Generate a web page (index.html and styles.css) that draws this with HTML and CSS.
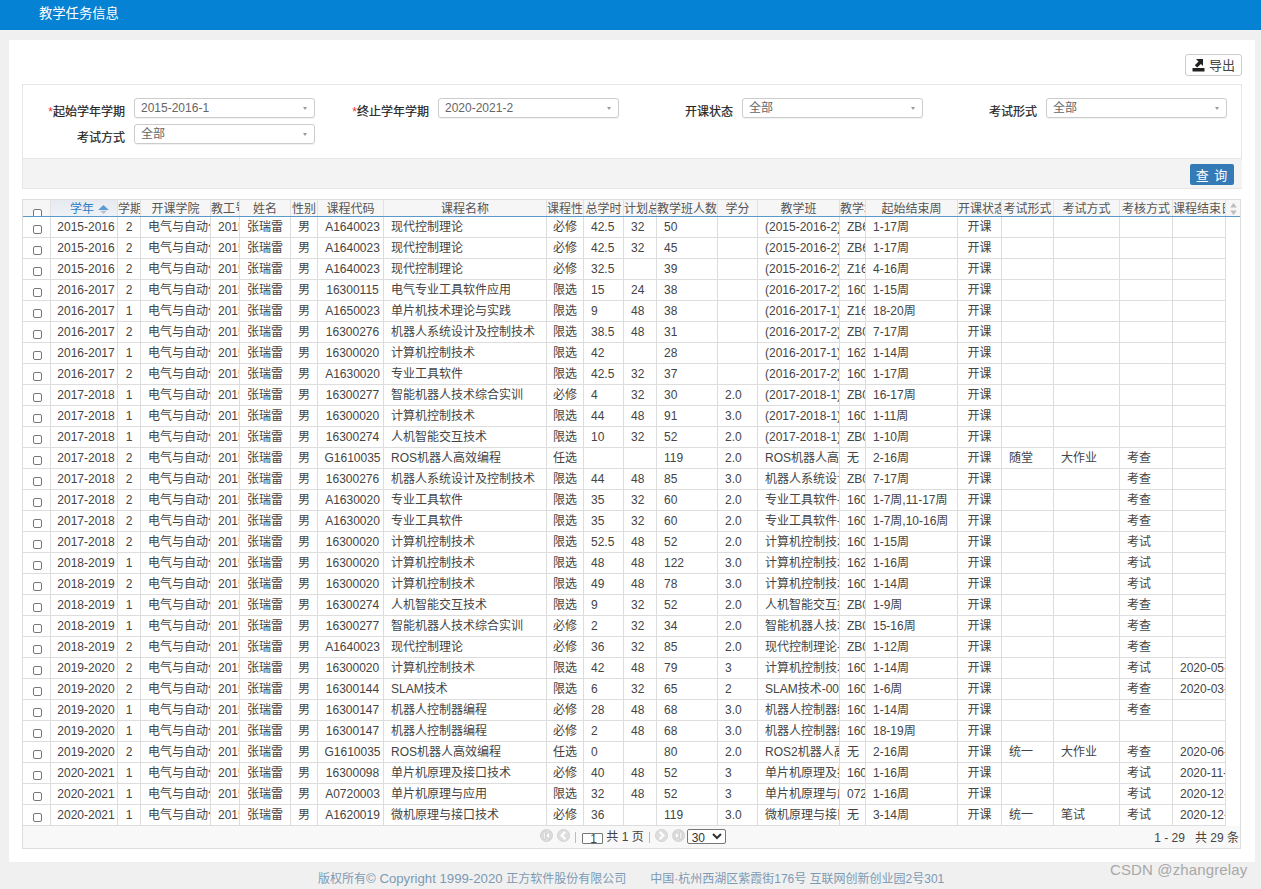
FILE: index.html
```html
<!DOCTYPE html>
<html lang="zh-CN">
<head>
<meta charset="utf-8">
<title>教学任务信息</title>
<link rel="stylesheet" href="styles.css">
</head>
<body>
<header class="topbar"><span class="topbar-title">教学任务信息</span></header>
<main class="panel">
  <div class="toolbar">
    <button class="export-btn" type="button">
      <svg class="export-icon" width="13" height="14" viewBox="0 0 13 14"><path d="M.5 10H12.500V13.500H.5Z" fill="#222"/><path d="M4 1H11V8L8.900 5.900 5.200 9.500 2.800 7.200 6.500 3.500Z" fill="#222"/></svg>
      <span>导出</span>
    </button>
  </div>
  <section class="filter">
    <div class="field"><label class="field-label"><i class="req">*</i>起始学年学期</label><div class="combo"><span>2015-2016-1</span><b class="combo-arrow"></b></div></div>
    <div class="field"><label class="field-label"><i class="req">*</i>终止学年学期</label><div class="combo"><span>2020-2021-2</span><b class="combo-arrow"></b></div></div>
    <div class="field"><label class="field-label">开课状态</label><div class="combo"><span>全部</span><b class="combo-arrow"></b></div></div>
    <div class="field"><label class="field-label">考试形式</label><div class="combo"><span>全部</span><b class="combo-arrow"></b></div></div>
    <div class="field"><label class="field-label">考试方式</label><div class="combo"><span>全部</span><b class="combo-arrow"></b></div></div>
  </section>
  <div class="actions"><button class="query-btn" type="button">查 询</button></div>
  <section class="grid">
    <table class="head-table">
      <colgroup><col class="c1"><col class="c2"><col class="c3"><col class="c4"><col class="c5"><col class="c6"><col class="c7"><col class="c8"><col class="c9"><col class="c10"><col class="c11"><col class="c12"><col class="c13"><col class="c14"><col class="c15"><col class="c16"><col class="c17"><col class="c18"><col class="c19"><col class="c20"><col class="c21"><col class="c22"><col class="c23"></colgroup>
      <thead><tr>
        <th><div class="head-clip"><input class="cb cb-head" type="checkbox"></div></th>
        <th class="sorted">学年 <svg class="sort-icon" width="13" height="9" viewBox="0 0 13 10"><path d="M6.500 0 12.500 5.500H.5Z" fill="#5b9bd5"/><path d="M2.500 6.500H10.500L6.500 10Z" fill="#b9c2cc"/></svg></th>
        <th>学期</th><th>开课学院</th><th>教工号</th><th>姓名</th><th>性别</th><th>课程代码</th><th>课程名称</th><th>课程性质</th><th>总学时</th><th>计划总学时</th><th class="wide">教学班人数</th><th>学分</th><th>教学班</th><th>教学地点</th><th>起始结束周</th><th>开课状态</th><th>考试形式</th><th>考试方式</th><th>考核方式</th><th>课程结束日期</th>
        <th class="filler"><svg class="scroll-icon" width="9" height="15" viewBox="0 0 9 15"><path d="M4.500 1 8 6H1Z" fill="#bbb"/><path d="M1 9H8L4.500 14Z" fill="#bbb"/></svg></th>
      </tr></thead>
    </table>
    <table class="body-table">
      <colgroup><col class="c1"><col class="c2"><col class="c3"><col class="c4"><col class="c5"><col class="c6"><col class="c7"><col class="c8"><col class="c9"><col class="c10"><col class="c11"><col class="c12"><col class="c13"><col class="c14"><col class="c15"><col class="c16"><col class="c17"><col class="c18"><col class="c19"><col class="c20"><col class="c21"><col class="c22"></colgroup>
      <tbody>
        <tr><td class="ck"><input class="cb" type="checkbox"></td><td class="yr">2015-2016</td><td class="ctr">2</td><td>电气与自动化工程学院</td><td>20150</td><td class="ctr">张瑞雷</td><td class="ctr">男</td><td class="yr">A1640023</td><td>现代控制理论</td><td class="ctr">必修</td><td>42.5</td><td>32</td><td>50</td><td></td><td>(2015-2016-2)-A1640023</td><td>ZB601</td><td>1-17周</td><td class="ctr">开课</td><td></td><td></td><td></td><td></td></tr>
        <tr><td class="ck"><input class="cb" type="checkbox"></td><td class="yr">2015-2016</td><td class="ctr">2</td><td>电气与自动化工程学院</td><td>20150</td><td class="ctr">张瑞雷</td><td class="ctr">男</td><td class="yr">A1640023</td><td>现代控制理论</td><td class="ctr">必修</td><td>42.5</td><td>32</td><td>45</td><td></td><td>(2015-2016-2)-A1640023</td><td>ZB601</td><td>1-17周</td><td class="ctr">开课</td><td></td><td></td><td></td><td></td></tr>
        <tr><td class="ck"><input class="cb" type="checkbox"></td><td class="yr">2015-2016</td><td class="ctr">2</td><td>电气与自动化工程学院</td><td>20150</td><td class="ctr">张瑞雷</td><td class="ctr">男</td><td class="yr">A1640023</td><td>现代控制理论</td><td class="ctr">必修</td><td>32.5</td><td></td><td>39</td><td></td><td>(2015-2016-2)-A1640023</td><td>Z1601</td><td>4-16周</td><td class="ctr">开课</td><td></td><td></td><td></td><td></td></tr>
        <tr><td class="ck"><input class="cb" type="checkbox"></td><td class="yr">2016-2017</td><td class="ctr">2</td><td>电气与自动化工程学院</td><td>20150</td><td class="ctr">张瑞雷</td><td class="ctr">男</td><td class="yr">16300115</td><td>电气专业工具软件应用</td><td class="ctr">限选</td><td>15</td><td>24</td><td>38</td><td></td><td>(2016-2017-2)-16300115</td><td>16001</td><td>1-15周</td><td class="ctr">开课</td><td></td><td></td><td></td><td></td></tr>
        <tr><td class="ck"><input class="cb" type="checkbox"></td><td class="yr">2016-2017</td><td class="ctr">1</td><td>电气与自动化工程学院</td><td>20150</td><td class="ctr">张瑞雷</td><td class="ctr">男</td><td class="yr">A1650023</td><td>单片机技术理论与实践</td><td class="ctr">限选</td><td>9</td><td>48</td><td>38</td><td></td><td>(2016-2017-1)-A1650023</td><td>Z1601</td><td>18-20周</td><td class="ctr">开课</td><td></td><td></td><td></td><td></td></tr>
        <tr><td class="ck"><input class="cb" type="checkbox"></td><td class="yr">2016-2017</td><td class="ctr">2</td><td>电气与自动化工程学院</td><td>20150</td><td class="ctr">张瑞雷</td><td class="ctr">男</td><td class="yr">16300276</td><td>机器人系统设计及控制技术</td><td class="ctr">限选</td><td>38.5</td><td>48</td><td>31</td><td></td><td>(2016-2017-2)-16300276</td><td>ZB001</td><td>7-17周</td><td class="ctr">开课</td><td></td><td></td><td></td><td></td></tr>
        <tr><td class="ck"><input class="cb" type="checkbox"></td><td class="yr">2016-2017</td><td class="ctr">1</td><td>电气与自动化工程学院</td><td>20150</td><td class="ctr">张瑞雷</td><td class="ctr">男</td><td class="yr">16300020</td><td>计算机控制技术</td><td class="ctr">限选</td><td>42</td><td></td><td>28</td><td></td><td>(2016-2017-1)-16300020</td><td>16201</td><td>1-14周</td><td class="ctr">开课</td><td></td><td></td><td></td><td></td></tr>
        <tr><td class="ck"><input class="cb" type="checkbox"></td><td class="yr">2016-2017</td><td class="ctr">2</td><td>电气与自动化工程学院</td><td>20150</td><td class="ctr">张瑞雷</td><td class="ctr">男</td><td class="yr">A1630020</td><td>专业工具软件</td><td class="ctr">限选</td><td>42.5</td><td>32</td><td>37</td><td></td><td>(2016-2017-2)-A1630020</td><td>16001</td><td>1-17周</td><td class="ctr">开课</td><td></td><td></td><td></td><td></td></tr>
        <tr><td class="ck"><input class="cb" type="checkbox"></td><td class="yr">2017-2018</td><td class="ctr">1</td><td>电气与自动化工程学院</td><td>20150</td><td class="ctr">张瑞雷</td><td class="ctr">男</td><td class="yr">16300277</td><td>智能机器人技术综合实训</td><td class="ctr">必修</td><td>4</td><td>32</td><td>30</td><td>2.0</td><td>(2017-2018-1)-16300277</td><td>ZB001</td><td>16-17周</td><td class="ctr">开课</td><td></td><td></td><td></td><td></td></tr>
        <tr><td class="ck"><input class="cb" type="checkbox"></td><td class="yr">2017-2018</td><td class="ctr">1</td><td>电气与自动化工程学院</td><td>20150</td><td class="ctr">张瑞雷</td><td class="ctr">男</td><td class="yr">16300020</td><td>计算机控制技术</td><td class="ctr">限选</td><td>44</td><td>48</td><td>91</td><td>3.0</td><td>(2017-2018-1)-16300020</td><td>16001</td><td>1-11周</td><td class="ctr">开课</td><td></td><td></td><td></td><td></td></tr>
        <tr><td class="ck"><input class="cb" type="checkbox"></td><td class="yr">2017-2018</td><td class="ctr">1</td><td>电气与自动化工程学院</td><td>20150</td><td class="ctr">张瑞雷</td><td class="ctr">男</td><td class="yr">16300274</td><td>人机智能交互技术</td><td class="ctr">限选</td><td>10</td><td>32</td><td>52</td><td>2.0</td><td>(2017-2018-1)-16300274</td><td>ZB001</td><td>1-10周</td><td class="ctr">开课</td><td></td><td></td><td></td><td></td></tr>
        <tr><td class="ck"><input class="cb" type="checkbox"></td><td class="yr">2017-2018</td><td class="ctr">2</td><td>电气与自动化工程学院</td><td>20150</td><td class="ctr">张瑞雷</td><td class="ctr">男</td><td class="yr">G1610035</td><td>ROS机器人高效编程</td><td class="ctr">任选</td><td></td><td></td><td>119</td><td>2.0</td><td>ROS机器人高效编程</td><td>无</td><td>2-16周</td><td class="ctr">开课</td><td>随堂</td><td>大作业</td><td>考查</td><td></td></tr>
        <tr><td class="ck"><input class="cb" type="checkbox"></td><td class="yr">2017-2018</td><td class="ctr">2</td><td>电气与自动化工程学院</td><td>20150</td><td class="ctr">张瑞雷</td><td class="ctr">男</td><td class="yr">16300276</td><td>机器人系统设计及控制技术</td><td class="ctr">限选</td><td>44</td><td>48</td><td>85</td><td>3.0</td><td>机器人系统设计及控制技术</td><td>ZB001</td><td>7-17周</td><td class="ctr">开课</td><td></td><td></td><td>考查</td><td></td></tr>
        <tr><td class="ck"><input class="cb" type="checkbox"></td><td class="yr">2017-2018</td><td class="ctr">2</td><td>电气与自动化工程学院</td><td>20150</td><td class="ctr">张瑞雷</td><td class="ctr">男</td><td class="yr">A1630020</td><td>专业工具软件</td><td class="ctr">限选</td><td>35</td><td>32</td><td>60</td><td>2.0</td><td>专业工具软件-0001</td><td>16001</td><td>1-7周,11-17周</td><td class="ctr">开课</td><td></td><td></td><td>考查</td><td></td></tr>
        <tr><td class="ck"><input class="cb" type="checkbox"></td><td class="yr">2017-2018</td><td class="ctr">2</td><td>电气与自动化工程学院</td><td>20150</td><td class="ctr">张瑞雷</td><td class="ctr">男</td><td class="yr">A1630020</td><td>专业工具软件</td><td class="ctr">限选</td><td>35</td><td>32</td><td>60</td><td>2.0</td><td>专业工具软件-0002</td><td>16001</td><td>1-7周,10-16周</td><td class="ctr">开课</td><td></td><td></td><td>考查</td><td></td></tr>
        <tr><td class="ck"><input class="cb" type="checkbox"></td><td class="yr">2017-2018</td><td class="ctr">2</td><td>电气与自动化工程学院</td><td>20150</td><td class="ctr">张瑞雷</td><td class="ctr">男</td><td class="yr">16300020</td><td>计算机控制技术</td><td class="ctr">限选</td><td>52.5</td><td>48</td><td>52</td><td>2.0</td><td>计算机控制技术-0001</td><td>16001</td><td>1-15周</td><td class="ctr">开课</td><td></td><td></td><td>考试</td><td></td></tr>
        <tr><td class="ck"><input class="cb" type="checkbox"></td><td class="yr">2018-2019</td><td class="ctr">1</td><td>电气与自动化工程学院</td><td>20150</td><td class="ctr">张瑞雷</td><td class="ctr">男</td><td class="yr">16300020</td><td>计算机控制技术</td><td class="ctr">限选</td><td>48</td><td>48</td><td>122</td><td>3.0</td><td>计算机控制技术-0002</td><td>16201</td><td>1-16周</td><td class="ctr">开课</td><td></td><td></td><td>考试</td><td></td></tr>
        <tr><td class="ck"><input class="cb" type="checkbox"></td><td class="yr">2018-2019</td><td class="ctr">2</td><td>电气与自动化工程学院</td><td>20150</td><td class="ctr">张瑞雷</td><td class="ctr">男</td><td class="yr">16300020</td><td>计算机控制技术</td><td class="ctr">限选</td><td>49</td><td>48</td><td>78</td><td>3.0</td><td>计算机控制技术-0003</td><td>16001</td><td>1-14周</td><td class="ctr">开课</td><td></td><td></td><td>考试</td><td></td></tr>
        <tr><td class="ck"><input class="cb" type="checkbox"></td><td class="yr">2018-2019</td><td class="ctr">1</td><td>电气与自动化工程学院</td><td>20150</td><td class="ctr">张瑞雷</td><td class="ctr">男</td><td class="yr">16300274</td><td>人机智能交互技术</td><td class="ctr">限选</td><td>9</td><td>32</td><td>52</td><td>2.0</td><td>人机智能交互技术-01</td><td>ZB001</td><td>1-9周</td><td class="ctr">开课</td><td></td><td></td><td>考查</td><td></td></tr>
        <tr><td class="ck"><input class="cb" type="checkbox"></td><td class="yr">2018-2019</td><td class="ctr">1</td><td>电气与自动化工程学院</td><td>20150</td><td class="ctr">张瑞雷</td><td class="ctr">男</td><td class="yr">16300277</td><td>智能机器人技术综合实训</td><td class="ctr">必修</td><td>2</td><td>32</td><td>34</td><td>2.0</td><td>智能机器人技术综合实训</td><td>ZB001</td><td>15-16周</td><td class="ctr">开课</td><td></td><td></td><td>考查</td><td></td></tr>
        <tr><td class="ck"><input class="cb" type="checkbox"></td><td class="yr">2018-2019</td><td class="ctr">2</td><td>电气与自动化工程学院</td><td>20150</td><td class="ctr">张瑞雷</td><td class="ctr">男</td><td class="yr">A1640023</td><td>现代控制理论</td><td class="ctr">必修</td><td>36</td><td>32</td><td>85</td><td>2.0</td><td>现代控制理论-0001</td><td>ZB001</td><td>1-12周</td><td class="ctr">开课</td><td></td><td></td><td>考查</td><td></td></tr>
        <tr><td class="ck"><input class="cb" type="checkbox"></td><td class="yr">2019-2020</td><td class="ctr">2</td><td>电气与自动化工程学院</td><td>20150</td><td class="ctr">张瑞雷</td><td class="ctr">男</td><td class="yr">16300020</td><td>计算机控制技术</td><td class="ctr">限选</td><td>42</td><td>48</td><td>79</td><td>3</td><td>计算机控制技术-0004</td><td>16001</td><td>1-14周</td><td class="ctr">开课</td><td></td><td></td><td>考试</td><td>2020-05-01</td></tr>
        <tr><td class="ck"><input class="cb" type="checkbox"></td><td class="yr">2019-2020</td><td class="ctr">2</td><td>电气与自动化工程学院</td><td>20150</td><td class="ctr">张瑞雷</td><td class="ctr">男</td><td class="yr">16300144</td><td>SLAM技术</td><td class="ctr">限选</td><td>6</td><td>32</td><td>65</td><td>2</td><td>SLAM技术-0001</td><td>16001</td><td>1-6周</td><td class="ctr">开课</td><td></td><td></td><td>考查</td><td>2020-03-01</td></tr>
        <tr><td class="ck"><input class="cb" type="checkbox"></td><td class="yr">2019-2020</td><td class="ctr">1</td><td>电气与自动化工程学院</td><td>20150</td><td class="ctr">张瑞雷</td><td class="ctr">男</td><td class="yr">16300147</td><td>机器人控制器编程</td><td class="ctr">必修</td><td>28</td><td>48</td><td>68</td><td>3.0</td><td>机器人控制器编程-01</td><td>16001</td><td>1-14周</td><td class="ctr">开课</td><td></td><td></td><td>考查</td><td></td></tr>
        <tr><td class="ck"><input class="cb" type="checkbox"></td><td class="yr">2019-2020</td><td class="ctr">1</td><td>电气与自动化工程学院</td><td>20150</td><td class="ctr">张瑞雷</td><td class="ctr">男</td><td class="yr">16300147</td><td>机器人控制器编程</td><td class="ctr">必修</td><td>2</td><td>48</td><td>68</td><td>3.0</td><td>机器人控制器编程-02</td><td>16001</td><td>18-19周</td><td class="ctr">开课</td><td></td><td></td><td></td><td></td></tr>
        <tr><td class="ck"><input class="cb" type="checkbox"></td><td class="yr">2019-2020</td><td class="ctr">2</td><td>电气与自动化工程学院</td><td>20150</td><td class="ctr">张瑞雷</td><td class="ctr">男</td><td class="yr">G1610035</td><td>ROS机器人高效编程</td><td class="ctr">任选</td><td>0</td><td></td><td>80</td><td>2.0</td><td>ROS2机器人高效编程</td><td>无</td><td>2-16周</td><td class="ctr">开课</td><td>统一</td><td>大作业</td><td>考查</td><td>2020-06-01</td></tr>
        <tr><td class="ck"><input class="cb" type="checkbox"></td><td class="yr">2020-2021</td><td class="ctr">1</td><td>电气与自动化工程学院</td><td>20150</td><td class="ctr">张瑞雷</td><td class="ctr">男</td><td class="yr">16300098</td><td>单片机原理及接口技术</td><td class="ctr">必修</td><td>40</td><td>48</td><td>52</td><td>3</td><td>单片机原理及接口技术</td><td>16001</td><td>1-16周</td><td class="ctr">开课</td><td></td><td></td><td>考试</td><td>2020-11-01</td></tr>
        <tr><td class="ck"><input class="cb" type="checkbox"></td><td class="yr">2020-2021</td><td class="ctr">1</td><td>电气与自动化工程学院</td><td>20150</td><td class="ctr">张瑞雷</td><td class="ctr">男</td><td class="yr">A0720003</td><td>单片机原理与应用</td><td class="ctr">限选</td><td>32</td><td>48</td><td>52</td><td>3</td><td>单片机原理与应用-01</td><td>07201</td><td>1-16周</td><td class="ctr">开课</td><td></td><td></td><td>考试</td><td>2020-12-01</td></tr>
        <tr><td class="ck"><input class="cb" type="checkbox"></td><td class="yr">2020-2021</td><td class="ctr">1</td><td>电气与自动化工程学院</td><td>20150</td><td class="ctr">张瑞雷</td><td class="ctr">男</td><td class="yr">A1620019</td><td>微机原理与接口技术</td><td class="ctr">必修</td><td>36</td><td></td><td>119</td><td>3.0</td><td>微机原理与接口技术</td><td>无</td><td>3-14周</td><td class="ctr">开课</td><td>统一</td><td>笔试</td><td>考试</td><td>2020-12-01</td></tr>
      </tbody>
    </table>
    <div class="pager">
      <span></span>
      <div class="pager-nav">
        <svg class="pg-icon" width="13" height="13" viewBox="0 0 14 14"><circle cx="7" cy="7" r="6.500" fill="#dedede" stroke="#d0d0d0"/><path d="M3.500 3H5.500V11H3.500ZM10.500 3V11L6 7Z" fill="#fff" stroke="#bbb" stroke-width=".6"/></svg>
        <svg class="pg-icon" width="13" height="13" viewBox="0 0 14 14"><circle cx="7" cy="7" r="6.500" fill="#dedede" stroke="#d0d0d0"/><path d="M9 3 5 7 9 11" fill="none" stroke="#fff" stroke-width="2.400"/></svg>
        <span class="pg-sep"></span>
        <input class="pg-input" type="text" value="1">
        <span class="pg-text">共 1 页</span>
        <span class="pg-sep pg-sep-end"></span>
        <svg class="pg-icon" width="13" height="13" viewBox="0 0 14 14"><circle cx="7" cy="7" r="6.500" fill="#dedede" stroke="#d0d0d0"/><path d="M5 3 9 7 5 11" fill="none" stroke="#fff" stroke-width="2.400"/></svg>
        <svg class="pg-icon pg-icon-last" width="13" height="13" viewBox="0 0 14 14"><circle cx="7" cy="7" r="6.500" fill="#dedede" stroke="#d0d0d0"/><path d="M10.500 3H8.500V11H10.500ZM3.500 3V11L8 7Z" fill="#fff" stroke="#bbb" stroke-width=".6"/></svg>
        <select class="pg-select"><option>30</option></select>
      </div>
      <div class="pager-info">1 - 29 &nbsp; 共 29 条</div>
    </div>
  </section>
</main>
<footer class="footer"><span>版权所有<span class="footer-latin">© Copyright 1999-2020 </span>正方软件股份有限公司</span><span>中国·杭州西湖区紫霞街176号 互联网创新创业园2号301</span></footer>
<div class="watermark">CSDN @zhangrelay</div>
</body>
</html>
```
FILE: styles.css
```css
* { box-sizing: border-box; }
html, body { height: 889px; overflow: hidden; }
body {
  margin: 0;
  background: #f0f0f0;
  color: #444;
  font: 12px/1.4 "Liberation Sans", "Noto Sans CJK SC", sans-serif;
}
.topbar {
  height: 30px;
  background: #0582d3;
  color: #fff;
  padding-left: 39px;
  line-height: 27px;
}
.topbar-title { font-size: 13.3px; }
.panel {
  width: 1246px;
  height: 822px;
  margin: 10px 0 0 9px;
  padding: 14px 13px 0;
  background: #fff;
}
.toolbar { display: flex; justify-content: flex-end; height: 22px; margin-bottom: 8px; }
.export-btn {
  display: flex;
  align-items: center;
  gap: 4px;
  width: 57px;
  height: 22px;
  padding: 0 0 1px 6px;
  background: #fff;
  border: 1px solid #ccc;
  border-radius: 3px;
  color: #444;
  font: 13px "Liberation Sans", "Noto Sans CJK SC", sans-serif;
}
.filter {
  display: grid;
  grid-template-columns: repeat(4, 304px);
  grid-auto-rows: 20px;
  align-content: start;
  row-gap: 6px;
  height: 74px;
  padding: 13px 0 0;
  border: 1px solid #e6e6e6;
  border-bottom: 0;
}
.field { display: flex; align-items: flex-start; height: 20px; }
.field-label {
  width: 102px;
  margin-right: 9px;
  padding-top: 4px;
  color: #222;
  line-height: 20px;
  text-align: right;
  -webkit-text-stroke: .2px #222;
}
.req { color: #e33; font-style: normal; -webkit-text-stroke: 0; }
.combo {
  position: relative;
  width: 181px;
  height: 20px;
  padding: 1px 0 0 6px;
  border: 1px solid #ccc;
  border-radius: 3px;
  color: #666;
  line-height: 17px;
  box-shadow: 0 1px 1px rgba(0, 0, 0, .06);
}
.combo-arrow {
  position: absolute;
  right: 7px;
  top: 8px;
  border: 2.5px solid transparent;
  border-top: 3px solid #999;
  border-bottom: 0;
}
.actions {
  display: flex;
  justify-content: flex-end;
  height: 31px;
  padding: 5px 8px 0 0;
  background: #f3f3f3;
  border: 1px solid #e6e6e6;
  border-width: 1px 0 1px 1px;
}
.query-btn {
  width: 44px;
  height: 21px;
  padding: 0;
  background: #337ab7;
  border: 0;
  border-radius: 2px;
  color: #fff;
  font: 13px "Liberation Sans", "Noto Sans CJK SC", sans-serif;
  letter-spacing: 1px;
}
.grid {
  width: 1219px;
  height: 650px;
  margin-top: 10px;
  border: 1px solid #ddd;
}
table { border-collapse: separate; border-spacing: 0; table-layout: fixed; }
.head-table { width: 1217px; border-bottom: 1px solid #5a9ac8; }
.body-table { width: 1203px; }
.c1 { width: 28px; } .c2 { width: 67px; } .c3 { width: 23px; } .c4 { width: 70px; }
.c5 { width: 29px; } .c6 { width: 51px; } .c7 { width: 27px; } .c8 { width: 66px; }
.c9 { width: 163px; } .c10 { width: 37px; } .c11 { width: 40px; } .c12 { width: 33px; }
.c13 { width: 61px; } .c14 { width: 40px; } .c15 { width: 82px; } .c16 { width: 26px; }
.c17 { width: 92px; } .c18 { width: 44px; } .c19 { width: 52px; } .c20 { width: 66px; }
.c21 { width: 53px; } .c22 { width: 53px; } .c23 { width: 14px; }
th {
  height: 16px;
  padding: 3px 0 0;
  overflow: hidden;
  background: #f6f6f6;
  border-right: 1px solid #e2e2e2;
  color: #555;
  font-weight: normal;
  line-height: 13px;
  text-align: center;
  white-space: nowrap;
}
th.wide { text-align: left; }
th.sorted {
  padding-left: 19px;
  background: linear-gradient(#e6eaf0, #eef2f6);
  color: #2a80c8;
  text-align: left;
}
th.filler { border-right: 0; padding: 1px 0 0; }
.head-clip { height: 13px; overflow: hidden; }
.scroll-icon { display: block; margin: 0 auto; height: 14px; }
.sort-icon { margin-top: 2px; vertical-align: top; }
td {
  height: 21px;
  padding: 1px 0 0 7px;
  overflow: hidden;
  border-right: 1px solid #ddd;
  border-bottom: 1px solid #ddd;
  line-height: 19px;
  white-space: nowrap;
}
td.ctr { padding: 1px 0 0; text-align: center; }
td.yr { padding: 1px 0 0 4px; text-align: center; }
td.ck { padding: 0; }
.cb {
  display: block;
  appearance: none;
  width: 9px;
  height: 9px;
  margin: 5px 0 0 10px;
  background: #fff;
  border: 1px solid #777;
  border-radius: 2px;
}
.cb-head { margin-top: 6px; }
.pager {
  display: grid;
  grid-template-columns: 1fr auto 1fr;
  height: 22px;
  padding: 0 1px 0 4px;
  background: #f8f8f8;
  color: #444;
}
.pager-nav { display: flex; align-items: flex-start; height: 22px; padding-top: 3px; }
.pg-icon { margin-right: 4px; }
.pg-icon-last { margin-right: 2px; }
.pg-sep { width: 1px; height: 11px; margin: 3px 6px 0 1px; background: #bbb; }
.pg-sep-end { margin: 3px 5px 0; }
.pg-input {
  width: 21px;
  height: 11px;
  margin: 4px 3px 0 0;
  padding: 0 0 0 7px;
  background: #fff;
  border: 1px solid #777;
  border-radius: 1px;
  color: #444;
  font: 12px "Liberation Sans", sans-serif;
}
.pg-text { margin-top: 1px; color: #444; line-height: 14px; white-space: nowrap; }
.pg-select {
  width: 39px;
  height: 15px;
  padding: 0;
  background: #fff;
  border: 1px solid #767676;
  border-radius: 2px;
  color: #333;
  font: 12px "Liberation Sans", sans-serif;
}
.pager-info { padding-top: 4px; text-align: right; white-space: pre; }
.footer {
  display: flex;
  gap: 24px;
  height: 27px;
  padding: 7px 0 0 318px;
  align-items: center;
  color: #7d9ab3;
  font-size: 12px;
}
.footer-latin { font-size: 13.2px; }
.watermark {
  position: absolute;
  left: 1110px;
  top: 859px;
  color: #a8a8a8;
  font-size: 15px;
  letter-spacing: .13px;
  white-space: nowrap;
}
```
